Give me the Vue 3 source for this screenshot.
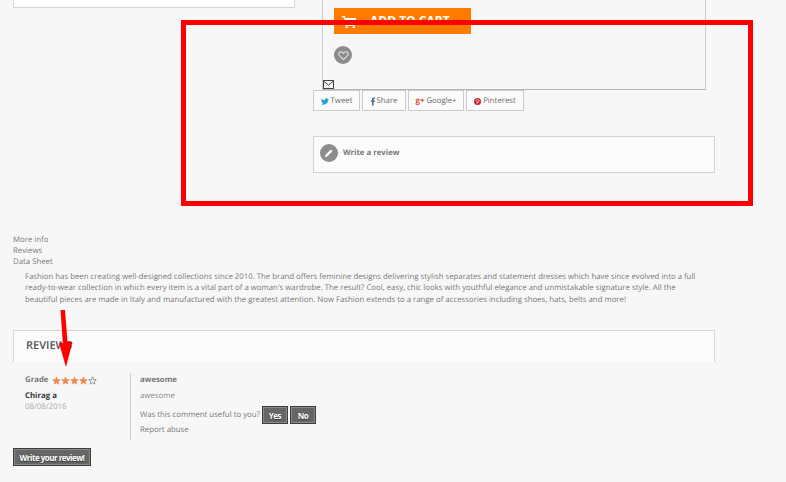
<script setup>
const socials = [
  { name: 'Tweet', icon: 'tw', w: 47 },
  { name: 'Share', icon: 'fb', w: 44 },
  { name: 'Google+', icon: 'gp', w: 56 },
  { name: 'Pinterest', icon: 'pi', w: 58 }
]
const tabs = ['More info', 'Reviews', 'Data Sheet']
const stars = [1, 1, 1, 1, 0]
</script>

<template>
  <div class="page">
    <div class="top">
      <div class="left-card"></div>
      <div class="right-col">
        <div class="buy-box">
          <button class="cart">
            <svg class="cart-ico" viewBox="0 0 14 12" width="14" height="12"><path d="M0 0h3l.5 2H14v5H4.500l.3 1.500H13V10H3.500L2 1.500H0z" fill="#fff"/><rect x="3.500" y="10.500" width="2.500" height="1.500" fill="#fff"/><rect x="10.500" y="10.500" width="2.500" height="1.500" fill="#fff"/></svg>
            ADD TO CART
          </button>
          <span class="wish">
            <svg viewBox="0 0 12 12" width="11" height="11"><path d="M6 10.400 1.600 6C.2 4.500.9 2 3.200 2 4.500 2 5.400 2.700 6 3.700 6.600 2.700 7.500 2 8.800 2c2.300 0 3 2.500 1.600 4z" fill="none" stroke="#eee" stroke-width="1.100"/></svg>
          </span>
          <svg class="mail" viewBox="0 0 11 9" width="11" height="9"><rect x=".5" y=".5" width="10" height="8" fill="none" stroke="#444"/><path d="M.5 1 5.500 5 10.500 1" fill="none" stroke="#444"/></svg>
        </div>
        <div class="socials">
          <span v-for="s in socials" :key="s.name" class="soc" :style="{ width: s.w + 'px' }">
            <svg v-if="s.icon === 'tw'" viewBox="0 0 10 8" width="8" height="7"><path d="M10 1 9 1.900C9 5.500 6.300 8 3.200 8 2 8 .9 7.600 0 7c1.100.1 2.100-.2 2.900-.8C2 6.100 1.300 5.600 1 4.800h.9C.9 4.500.4 3.700.4 2.800c.3.100.6.200.9.200C.4 2.300.2 1.100.7.300 1.700 1.500 3.100 2.300 4.800 2.400 4.500 1 5.500 0 6.800 0c.6 0 1.200.3 1.600.7L9.700.2 9 1.300z" fill="#2b9fdc"/></svg>
            <svg v-else-if="s.icon === 'fb'" viewBox="0 0 5 10" width="4" height="9"><path d="M1.400 10V5.400H0V3.700h1.400V2.400C1.400.9 2.200 0 3.700 0H5v1.700H4c-.6 0-.8.300-.8.800v1.200H5l-.3 1.700H3.200V10z" fill="#3b5998"/></svg>
            <span v-else-if="s.icon === 'gp'" class="gp">g+</span>
            <svg v-else viewBox="0 0 10 10" width="7" height="7"><circle cx="5" cy="5" r="5" fill="#c8232c"/><path d="M4.200 8.500 5 4.500M3 5C2.400 3.500 3.500 2.300 5 2.300c1.600 0 2.400 1 2.200 2.400C7 6.200 5.600 6.800 4.700 5.800" fill="none" stroke="#fff" stroke-width=".9"/></svg>
            {{ s.name }}
          </span>
        </div>
        <div class="write-box">
          <span class="pen">
            <svg viewBox="0 0 10 10" width="10" height="10"><path d="M1 9 1.500 6.800 6.800 1.500 8.500 3.200 3.200 8.500z" fill="#fff"/></svg>
          </span>
          <span class="write-text">Write a review</span>
        </div>
      </div>
    </div>

    <div class="tabs">
      <div v-for="t in tabs" :key="t">{{ t }}</div>
    </div>
    <p class="desc">Fashion has been creating well-designed collections since 2010. The brand offers feminine designs delivering stylish separates and statement dresses which have since evolved into a full ready-to-wear collection in which every item is a vital part of a woman's wardrobe. The result? Cool, easy, chic looks with youthful elegance and unmistakable signature style. All the beautiful pieces are made in Italy and manufactured with the greatest attention. Now Fashion extends to a range of accessories including shoes, hats, belts and more!</p>

    <div class="rev-head">REVIEWS</div>
    <div class="review">
      <div class="author">
        <div class="grade-row">
          <span class="grade">Grade</span>
          <span class="stars">
            <svg v-for="(s, i) in stars" :key="i" viewBox="0 0 10 10" width="9" height="9"><path d="M5 1 6.200 3.800 9.200 4.100 6.900 6.100 7.600 9 5 7.500 2.400 9 3.100 6.100 .8 4.100 3.800 3.800z" :fill="s ? '#ee8a50' : 'none'" :stroke="s ? '#ee8a50' : '#666'" stroke-width=".7"/></svg>
          </span>
        </div>
        <div class="name">Chirag a</div>
        <div class="date">08/08/2016</div>
      </div>
      <div class="body">
        <div class="title">awesome</div>
        <div class="txt">awesome</div>
        <div class="useful">Was this comment useful to you?
          <button class="btn yn">Yes</button><button class="btn yn">No</button>
        </div>
        <div class="abuse">Report abuse</div>
      </div>
    </div>
    <button class="btn write-btn">Write your review!</button>

    <div class="red-box"></div>
    <svg class="arrow" viewBox="0 0 14 60" width="14" height="60"><path d="M1.500 1 6 1 8.500 33 13.500 33 7 58 0 34 3.800 34z" fill="#f00"/></svg>
  </div>
</template>

<style>
html, body { margin: 0; background: #f7f7f7; }
</style>

<style scoped>
.page {
  position: relative;
  width: 786px;
  height: 482px;
  overflow: hidden;
  background: #f7f7f7;
  box-sizing: border-box;
  padding: 0 71px 0 13px;
  font-family: "Open Sans", sans-serif;
  font-size: 7.800px;
  line-height: 11px;
  color: #777;
  text-rendering: geometricPrecision;
}
.top { display: flex; height: 235px; }
.left-card {
  width: 282px;
  height: 8px;
  box-sizing: border-box;
  background: #fff;
  border: 1px solid #d6d4d4;
  border-top: 0;
}
.right-col { margin-left: 18px; width: 402px; }
.buy-box {
  position: relative;
  margin-left: 9px;
  width: 384px;
  height: 90px;
  box-sizing: border-box;
  padding: 8px 0 0 11px;
  border: 1px solid #ccc;
  border-top: 0;
  border-bottom-color: #b5b5b5;
}
.cart {
  display: flex;
  align-items: center;
  width: 137px;
  height: 26px;
  border: 0;
  padding: 0 0 1px 8px;
  background: #ff7b00;
  color: #fff;
  font: 700 12px "Open Sans", sans-serif;
  gap: 14px;
}
.cart-ico { flex: none; margin-top: 3px; }
.wish, .pen {
  display: flex;
  align-items: center;
  justify-content: center;
  width: 18px;
  height: 18px;
  border-radius: 50%;
  background: #8c8c8c;
}
.wish { margin-top: 12px; }
.mail { position: absolute; left: 0; bottom: 0; }
.socials { display: flex; gap: 2px; height: 21px; }
.soc {
  display: flex;
  align-items: center;
  justify-content: center;
  gap: 2px;
  box-sizing: border-box;
  height: 21px;
  padding-top: 1px;
  border: 1px solid #ccc;
  background: #fbfbfb;
  white-space: nowrap;
  color: #6b6b6b;
}
.gp { color: #dd4b39; font-weight: 700; }
.write-box {
  display: flex;
  align-items: center;
  gap: 5px;
  box-sizing: border-box;
  height: 37px;
  margin-top: 25px;
  padding: 0 0 3px 6px;
  border: 1px solid #d4d4d4;
  background: #fbfbfb;
}
.write-text { font-weight: 700; color: #777; }
.tabs { color: #777; }
.desc { margin: 0; padding: 4px 0 0 12px; width: 678px; line-height: 11.400px; color: #777; }
.rev-head {
  box-sizing: border-box;
  height: 32px;
  margin-top: 24px;
  padding: 7px 0 0 12px;
  border: 1px solid #d6d4d4;
  border-bottom: 0;
  background: #fbfbfb;
  font-weight: 600;
  font-size: 11px;
  line-height: 16px;
  color: #555;
}
.review { display: flex; margin-top: 11px; padding-left: 12px; height: 67px; }
.author { width: 105px; padding-top: 1px; border-right: 1px solid #ccc; }
.grade-row { display: flex; align-items: center; gap: 4px; height: 12px; }
.grade { font-weight: 700; color: #777; }
.stars { display: flex; }
.name { margin-top: 5px; font-weight: 700; color: #333; }
.date { color: #aaa; }
.body { padding: 2px 0 0 9px; }
.title { font-weight: 700; height: 12px; color: #777; }
.txt { margin-top: 4px; color: #888; }
.useful { display: flex; align-items: center; gap: 2px; margin-top: 4px; height: 18px; white-space: nowrap; }
.abuse { margin-top: 1px; }
.btn {
  box-sizing: border-box;
  height: 18px;
  padding: 0;
  margin: 0;
  border: 1px solid #3d3d3d;
  box-shadow: inset 0 0 0 1px #8a8a8a;
  background: #666;
  color: #fff;
  font: 700 8px "Open Sans", sans-serif;
  letter-spacing: -0.500px;
  text-shadow: 0 1px 1px #333;
}
.yn { width: 26px; }
.write-btn { display: block; margin-top: 8px; width: 78px; white-space: nowrap; }
.red-box {
  position: absolute;
  left: 181px;
  top: 20px;
  width: 572px;
  height: 186px;
  box-sizing: border-box;
  border: 5px solid #f00;
}
.arrow { position: absolute; left: 59px; top: 309px; }
</style>
